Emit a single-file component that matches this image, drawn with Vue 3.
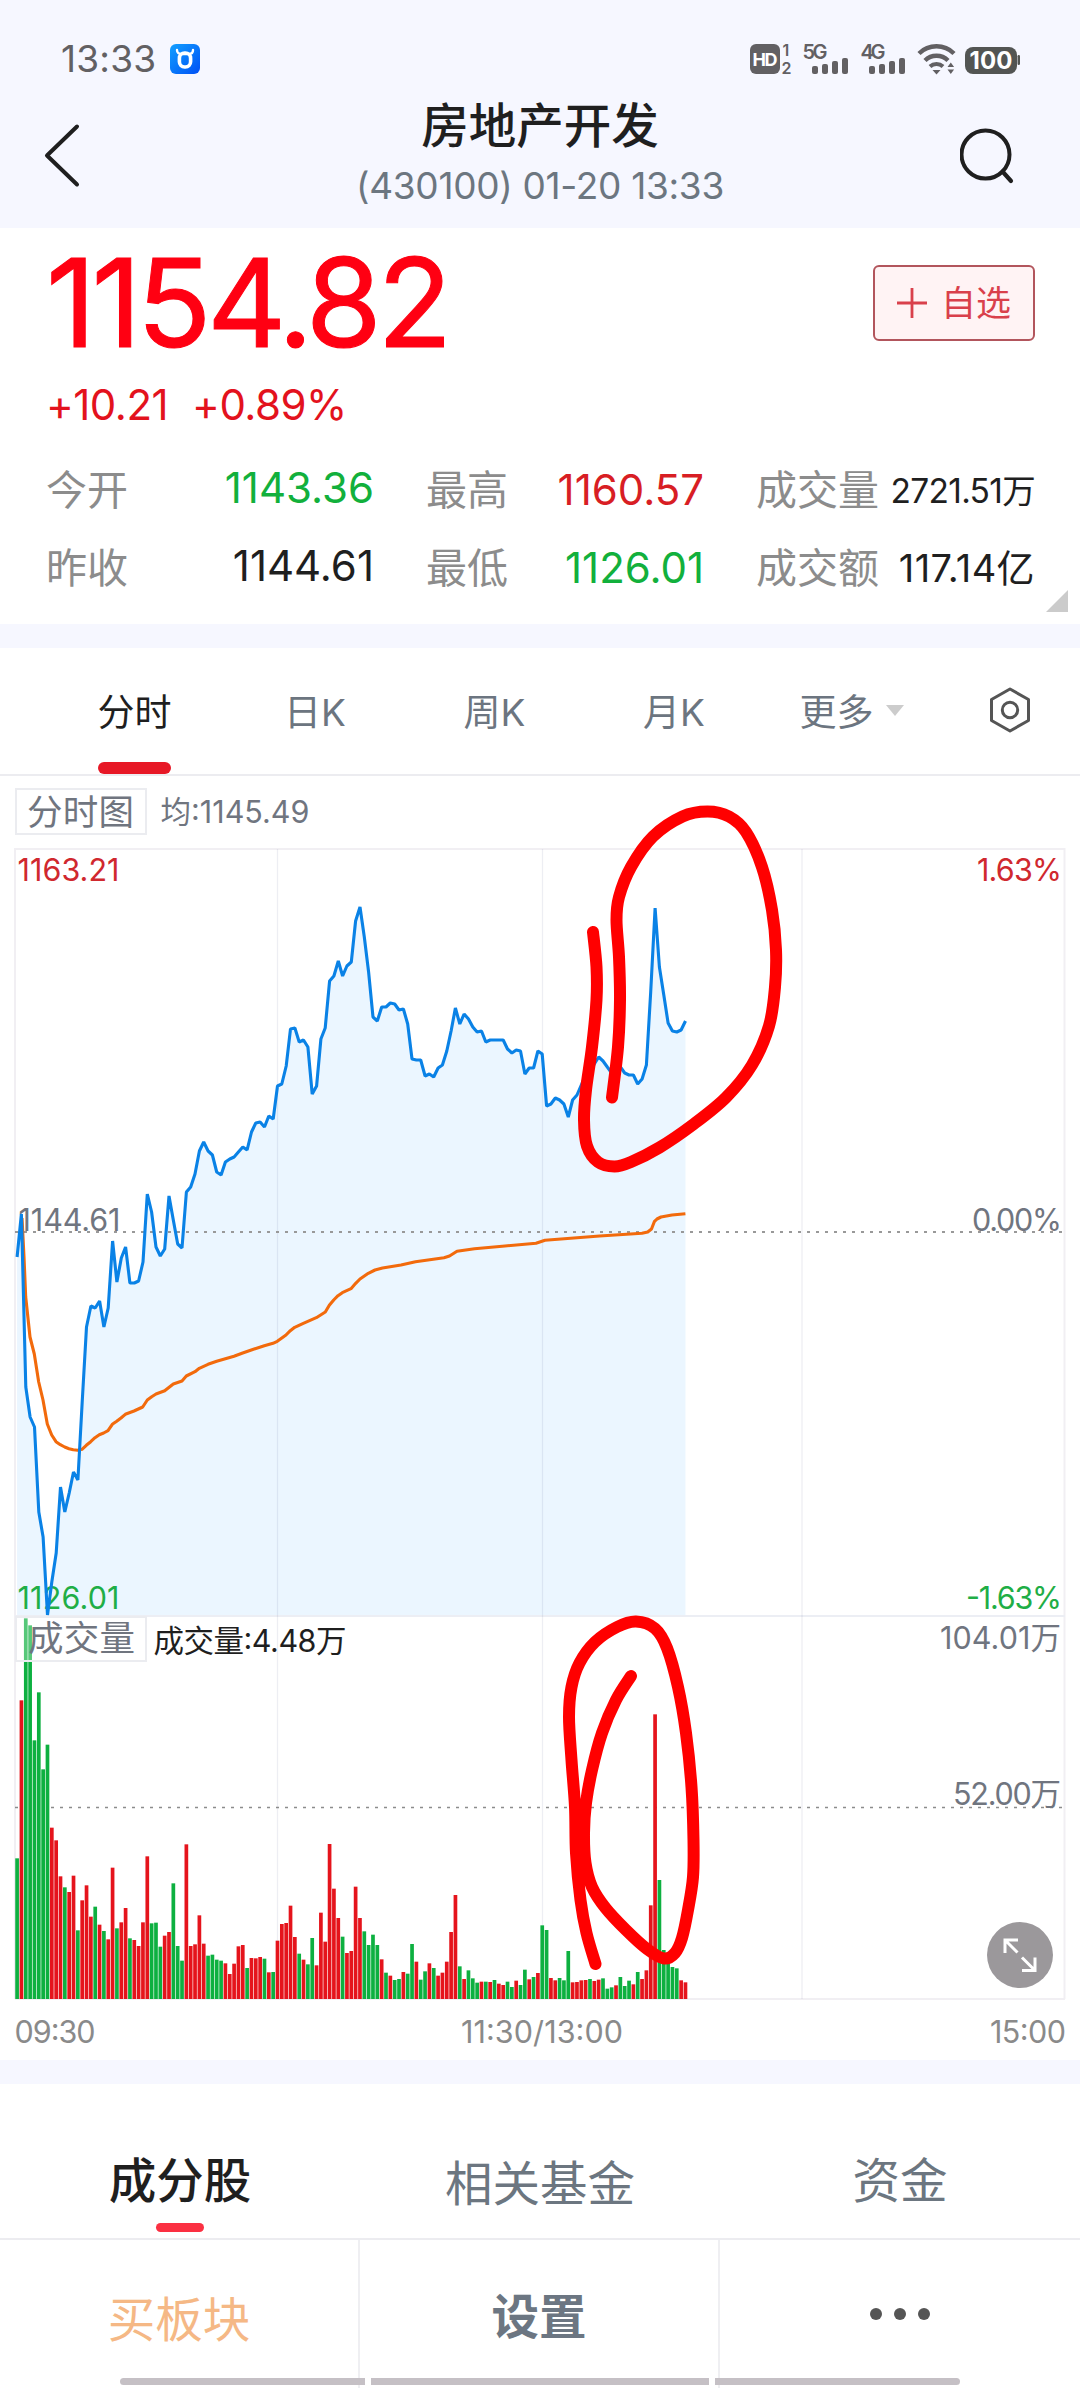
<template>
  <div class="page">
    <header class="header">
      <div class="status-bar">
        <span class="clock">13:33</span>
        <svg class="app-badge" width="30" height="30" viewBox="0 0 30 30">
          <defs>
            <linearGradient id="badge" x1="0" y1="0" x2="1" y2="1">
              <stop offset="0" stop-color="#12a0ff" />
              <stop offset="1" stop-color="#0050f5" />
            </linearGradient>
          </defs>
          <rect width="30" height="30" rx="6" fill="url(#badge)" />
          <path d="M7 6c0 3 2 4 4 4h8c2 0 4-1 4-4" fill="none" stroke="#fff" stroke-width="2.4" stroke-linecap="round" />
          <rect x="9.4" y="9" width="11.2" height="14" rx="5.2" fill="none" stroke="#fff" stroke-width="3.6" />
        </svg>
        <svg class="signals" width="272" height="50" viewBox="0 -8 272 50">
          <rect x="2" y="2" width="30" height="30" rx="6" fill="#626063" />
          <text x="4.5" y="23.500" class="st-hd" textLength="25">HD</text>
          <text x="34.500" y="14" class="st-num">1</text>
          <text x="33.5" y="32" class="st-num">2</text>
          <text x="54.5" y="17" class="st-net" textLength="25">5G</text>
          <text x="112.5" y="17" class="st-net" textLength="25">4G</text>
          <g v-for="x in [64, 121]" :key="x" fill="#626063">
            <rect :x="x" y="24" width="6" height="8" rx="2" />
            <rect :x="x + 10" y="22" width="6" height="10" rx="2" />
            <rect :x="x + 20" y="19" width="6" height="13" rx="2" />
            <rect :x="x + 30" y="16" width="6" height="16" rx="2" />
          </g>
          <g fill="none" stroke="#626063" stroke-width="4.500">
            <path d="M171 11.5a25 25 0 0 1 35 0" />
            <path d="M177 18.5a16.500 16.500 0 0 1 23 0" />
            <path d="M182 24.500a9.500 9.500 0 0 1 13 0" stroke-width="4" />
          </g>
          <path d="M184.500 28h8l-4 4.500z M199.500 25l3.300-4.600 3.300 4.600z M199.500 27.500l3.300 4.600 3.300-4.600z" fill="#626063" />
          <rect x="217" y="5" width="52" height="27" rx="8" fill="#535553" />
          <rect x="269.500" y="13" width="2.500" height="10" rx="1.200" fill="#535553" />
          <text x="221.500" y="27" class="st-bat" textLength="43">100</text>
        </svg>
      </div>
      <div class="title-bar">
        <svg width="60" height="70" viewBox="0 0 60 70">
          <path d="M47 6.500 17 35.500l30 29" fill="none" stroke="#1f1f1f" stroke-width="4" stroke-linecap="round" stroke-linejoin="round" />
        </svg>
        <div class="title">
          <h1>房地产开发</h1>
          <p>(430100) 01-20 13:33</p>
        </div>
        <svg width="60" height="70" viewBox="0 0 60 70">
          <circle cx="25.500" cy="34.500" r="24" fill="none" stroke="#1f1f1f" stroke-width="4" />
          <path d="M42.500 51.500 51 61" stroke="#1f1f1f" stroke-width="4.200" stroke-linecap="round" />
        </svg>
      </div>
    </header>

    <section class="quote">
      <div class="quote-top">
        <div class="price">1154.82</div>
        <button class="watch">
          <svg width="30" height="30" viewBox="0 0 30 30">
            <path d="M15 0v30M0 15h30" stroke="#d9404b" stroke-width="2.800" />
          </svg>
          <span>自选</span>
        </button>
      </div>
      <div class="change"><span>+10.21</span><span>+0.89%</span></div>
      <div class="stats">
        <div v-for="s in stats" :key="s.label" class="stat">
          <span class="stat-label">{{ s.label }}</span>
          <span class="stat-value" :class="s.cls">{{ s.value }}</span>
        </div>
      </div>
      <svg class="corner" width="22" height="22" viewBox="0 0 22 22">
        <path d="M22 0v22H0z" fill="#cbcbcb" />
      </svg>
    </section>

    <nav class="periods">
      <span class="period active">分时</span>
      <span class="period">日K</span>
      <span class="period">周K</span>
      <span class="period">月K</span>
      <span class="period more">更多<i class="caret"></i></span>
      <span class="period gear">
        <svg width="44" height="48" viewBox="0 0 44 48">
          <path d="M22 3 40.500 13.500v21L22 45 3.500 34.500v-21z" fill="none" stroke="#555" stroke-width="3" stroke-linejoin="round" />
          <circle cx="22" cy="24" r="7.700" fill="none" stroke="#555" stroke-width="3" />
        </svg>
      </span>
    </nav>

    <svg class="chart" width="1080" height="1284" viewBox="0 776 1080 1284">
      <!-- Header labels -->
      <rect x="16" y="789" width="130" height="45" class="tag" />
      <text x="27" y="825" class="tag-text" textLength="107">分时图</text>
      <text x="160.500" y="823" class="lbl" textLength="149">均:1145.49</text>

      <path :d="areaPath" fill="#ebf6ff" />

      <!-- Grid -->
      <g stroke="#f1eff3" stroke-width="2" fill="none">
        <path d="M15 849H1065M15 1999H1065M15 848V1999M1064.500 848V1999" />
        <path d="M15 1616H1065" stroke="#eceef4" />
      </g>
      <path d="M277.500 849V1999M542.500 849V1999M802 849V1999" stroke="#1a2a60" stroke-opacity=".08" stroke-width="1.200" />
      <path d="M15 1232H1063" stroke="#999" stroke-width="2" stroke-dasharray="3 6" />
      <path d="M15 1807.500H1063" stroke="#8c8c8c" stroke-width="1.400" stroke-dasharray="3 6" />

      <!-- Axis values -->
      <text x="17.500" y="881" class="lbl up" textLength="102">1163.21</text>
      <text x="18.500" y="1231" class="lbl" textLength="102">1144.61</text>
      <text x="17.500" y="1608.500" class="lbl down" textLength="102">1126.01</text>
      <text x="977" y="881" class="lbl up" textLength="85">1.63%</text>
      <text x="972" y="1231" class="lbl" textLength="90">0.00%</text>
      <text x="966" y="1608.500" class="lbl down" textLength="96">-1.63%</text>

      <polyline :points="avgLine" fill="none" stroke="#f26a0c" stroke-width="3.100" stroke-linejoin="round" />
      <polyline :points="priceLine" fill="none" stroke="#0a82e6" stroke-width="3.100" stroke-linejoin="bevel" />

      <!-- Volume -->
      <rect
        v-for="(b, i) in bars"
        :key="i"
        :x="b.x"
        :y="b.y"
        width="3.700"
        :height="b.h"
        :fill="b.color"
      />
      <rect x="16" y="1617" width="130" height="44" class="tag tag-over" />
      <text x="28" y="1651" class="tag-text" textLength="107">成交量</text>
      <text x="153.500" y="1652" class="lbl dark" textLength="193">成交量:4.48万</text>
      <text x="940" y="1649" class="lbl" textLength="121">104.01万</text>
      <text x="953" y="1804.500" class="lbl" textLength="108">52.00万</text>

      <circle cx="1020" cy="1955" r="33" fill="#9b989b" />
      <path
        d="M1017.500 1952.500 1005 1940M1018 1940h-13v13M1022 1957.500l12.500 12.500M1022 1970.500h13v-13"
        fill="none" stroke="#fff" stroke-width="3"
      />

      <text x="14.500" y="2043" class="lbl time" textLength="81">09:30</text>
      <text x="461" y="2043" class="lbl time" textLength="162">11:30/13:00</text>
      <text x="990" y="2043" class="lbl time" textLength="76">15:00</text>

      <!-- Freehand marks -->
      <path v-for="(m, i) in marks" :key="'m' + i" :d="smooth(m)" class="mark" />
    </svg>

    <nav class="sections">
      <span class="section active">成分股</span>
      <span class="section lower">相关基金</span>
      <span class="section">资金</span>
    </nav>

    <footer class="actions">
      <span class="action buy">买板块</span>
      <span class="action setting">设置</span>
      <span class="action dots"><i></i><i></i><i></i></span>
      <div class="home-bar"><b></b><b></b><b></b></div>
    </footer>
  </div>
</template>

<script setup>
const stats = [
  { label: '今开', value: '1143.36', cls: 'down' },
  { label: '最高', value: '1160.57', cls: 'up low' },
  { label: '成交量', value: '2721.51万', cls: 'small' },
  { label: '昨收', value: '1144.61', cls: '' },
  { label: '最低', value: '1126.01', cls: 'down low' },
  { label: '成交额', value: '117.14亿', cls: 'medium' },
]

const X0 = 17.1
const STEP = 4.34
const BASE = 1999

// one entry per minute
const price = [
  1257, 1214, 1387, 1417, 1427, 1512, 1537, 1615, 1582, 1553, 1487, 1512, 1493, 1472, 1480, 1402,
  1327, 1306, 1308, 1301, 1327, 1308, 1241, 1282, 1258, 1247, 1283, 1283, 1281, 1262, 1194, 1212,
  1247, 1256, 1249, 1196, 1220, 1244, 1248, 1192, 1187, 1174, 1151, 1142, 1151, 1155, 1172, 1175,
  1162, 1159, 1157, 1152, 1147, 1150, 1132, 1123, 1122, 1127, 1116, 1119, 1086, 1084, 1066, 1029,
  1028, 1042, 1040, 1047, 1094, 1086, 1039, 1028, 981, 976, 961, 976, 966, 962, 921, 907,
  937, 972, 1017, 1021, 1007, 1007, 1003, 1004, 1010, 1009, 1024, 1059, 1060, 1060, 1076, 1074,
  1077, 1068, 1065, 1051, 1031, 1008, 1024, 1014, 1019, 1027, 1032, 1031, 1042, 1040, 1040, 1040,
  1040, 1049, 1053, 1050, 1051, 1074, 1068, 1068, 1051, 1054, 1106, 1104, 1098, 1100, 1104, 1117,
  1100, 1095, 1085, 1075, 1070, 1064, 1057, 1061, 1067, 1073, 1072, 1067, 1073, 1075, 1075, 1084,
  1079, 1065, 992, 908, 967, 995, 1023, 1031, 1032, 1030, 1021,
]

// positive = red, negative = green
const volume = [
  -422, 896, -1142, -1121, -776, -920, -689, -763, 514, 476, 368, -335, 321, 370, -206, 296,
  341, 247, -277, 223, -204, 179, 394, -212, 230, 273, -182, 177, 159, 230, 428, -227,
  -229, -157, 190, 201, -347, -159, -115, 464, 159, 164, 251, 166, -130, -133, -118, -115,
  107, 75, 106, 158, 162, -93, 123, 122, 126, -121, 80, -81, 175, 225, 228, 280,
  186, -136, 118, -104, -183, 101, 259, 172, 465, 331, 243, -187, 138, 144, 337, 243,
  -203, -162, -193, -162, 119, -79, 70, -57, -60, 81, -76, -165, 112, -58, -83, 107,
  -93, 70, 79, 112, 201, 312, -98, 60, -86, -62, -49, 52, -52, 51, -57, 46,
  42, -52, -36, 55, -42, -88, 59, -66, 78, -221, -207, 63, 56, -63, -56, -144,
  50, 51, 56, 57, -60, 54, 58, -62, -31, -35, 41, -66, -39, -55, 44, -81,
  60, 86, 281, 854, -357, -147, -112, -96, -92, 56, 50,
]

const priceLine = price.map((y, i) => `${(X0 + i * STEP).toFixed(1)},${y}`).join(' ')
const lastX = X0 + (price.length - 1) * STEP
const areaPath = `M${X0} 1616 L${priceLine} L${lastX} 1616 Z`

const avgLine =
  '22,1218 24,1257 25.700,1297 30,1337 34.300,1354 38.700,1382 43,1400 47.300,1424 51.700,1435 56,1441.700 60.300,1444.700 ' +
  '64.700,1447 69,1448.700 73.300,1449.700 77.700,1450.300 82,1449.300 86.300,1445.300 90.700,1441.700 95,1437.700 99.300,1434.700 ' +
  '103.700,1433 108,1430.700 112.300,1424.300 116.700,1421.300 121,1418 125.300,1414.300 134,1411 142.700,1407 147.300,1400 ' +
  '151.700,1396.700 156,1394 164.700,1390.700 173.300,1384 182,1381 186.300,1376 195,1371.700 199.300,1368.300 208,1364.300 ' +
  '216.700,1361.300 234,1356.300 242.700,1353 251.300,1350 264.300,1345.700 273,1343.300 277.300,1341.300 286,1335 290.300,1330.700 ' +
  '294.700,1327.300 303.300,1323.300 316.300,1317.700 325.300,1312 329.300,1305.300 333.700,1300 338,1295.700 342.300,1292.700 ' +
  '351,1288.700 355.700,1283.300 360,1279 368.300,1273.300 375,1270 382.500,1268 401,1265 415.500,1261.700 444,1257.700 ' +
  '449.500,1256 457,1251.300 474.500,1248.700 505,1246 536,1243.300 545,1240.300 599.600,1236 642,1233.300 647.700,1232 ' +
  '651.500,1229 654.300,1221.700 657,1219 661,1217 672,1215 685.400,1213.700'

const bars = volume.map((v, i) => {
  const h = Math.abs(v) / 3
  return { x: X0 + i * STEP - 1.85, y: BASE - h, h, color: v > 0 ? '#e5141c' : '#0db040' }
})

const marks = [
  [
    [593, 932], [596.5, 967], [596.5, 1000], [592, 1047], [586, 1090], [584, 1120], [587, 1146],
    [598, 1162], [614.5, 1166.5], [631, 1162], [659.5, 1147.5], [692.5, 1125], [726, 1097.5],
    [752, 1065], [769, 1026], [775, 987], [776, 950], [772, 910], [762, 867], [746, 832],
    [729, 816.5], [707.5, 811.5], [682.5, 816.5], [653, 836.5], [631, 867], [619, 897],
    [616.5, 920], [619, 957], [620, 1000], [618, 1047], [612, 1097.5],
  ],
  [
    [631, 1676], [616, 1700], [602, 1733], [592, 1770], [586, 1803], [584, 1833], [585.5, 1863],
    [592, 1887], [605.5, 1908], [626, 1930], [647, 1949], [664, 1958.5], [675, 1953], [682, 1938],
    [688, 1910], [693, 1877], [693.5, 1840], [691.5, 1787], [686, 1733], [678, 1687], [667, 1648],
    [655, 1628.5], [636, 1621.5], [617, 1627], [595, 1642], [579.5, 1663], [571.5, 1687],
    [569, 1717], [571.5, 1760], [575, 1807], [576, 1853], [580.5, 1900], [586.5, 1933], [595.5, 1964],
  ],
]

// Catmull-Rom spline as cubic beziers
function smooth(p) {
  let d = `M${p[0]}`
  for (let i = 0; i < p.length - 1; i++) {
    const a = p[i - 1] || p[i]
    const b = p[i]
    const c = p[i + 1]
    const e = p[i + 2] || c
    d += ` C${b[0] + (c[0] - a[0]) / 6},${b[1] + (c[1] - a[1]) / 6}`
    d += ` ${c[0] - (e[0] - b[0]) / 6},${c[1] - (e[1] - b[1]) / 6} ${c}`
  }
  return d
}
</script>

<style>
body {
  background: #fff;
}
</style>

<style scoped>
.page {
  width: 1080px;
  height: 2388px;
  display: flex;
  flex-direction: column;
  overflow: hidden;
  background: #fff;
  color: #1f1f1f;
  font-family: Inter, 'Noto Sans CJK SC', sans-serif;
}

/* Header */
.header {
  height: 228px;
  flex-shrink: 0;
  background: #f6f7ff;
}

.status-bar {
  display: flex;
  align-items: center;
  height: 46px;
  padding: 36px 60px 0 61px;
}

.clock {
  width: 109px;
  font-size: 37px;
  line-height: 46px;
  letter-spacing: 0.2px;
  color: #626063;
}

.signals {
  margin-left: auto;
}

.st-hd {
  font: 700 18px Inter, sans-serif;
  fill: #fff;
}

.st-num {
  font: 600 16px Inter, sans-serif;
  fill: #626063;
}

.st-net {
  font: 600 20px Inter, sans-serif;
  fill: #626063;
}

.st-bat {
  font: 700 24px Inter, sans-serif;
  fill: #fff;
}

.title-bar {
  display: flex;
  justify-content: space-between;
  align-items: flex-start;
  padding: 11px 60px 0 30px;
}

.title-bar > svg {
  margin-top: 27px;
}

.title {
  margin-left: 30px;
  text-align: center;
}

h1 {
  margin: 0;
  font-size: 47.5px;
  font-weight: 500;
  line-height: 66px;
}

.title p {
  margin: 4px 0 0;
  font-size: 37px;
  line-height: 46px;
  letter-spacing: -0.3px;
  color: #6c7680;
}

/* Quote */
.quote {
  position: relative;
  box-sizing: border-box;
  height: 396px;
  flex-shrink: 0;
  padding: 0 45px 0 46px;
}

.quote-top {
  display: flex;
  justify-content: space-between;
  align-items: flex-start;
  height: 148px;
}

.price {
  font-size: 123px;
  line-height: 149px;
  letter-spacing: -4.6px;
  color: #ff0012;
  -webkit-text-stroke: 1px #ff0012;
}

.watch {
  display: flex;
  align-items: center;
  gap: 14px;
  box-sizing: border-box;
  width: 162px;
  height: 76px;
  margin-top: 37px;
  padding: 0 0 0 22px;
  border: 2px solid #b2555c;
  border-radius: 6px;
  background: #fff3f4;
  color: #d9404b;
  font: 35px/50px 'Noto Sans CJK SC', sans-serif;
}

.watch span {
  margin-top: -4px;
}

.change {
  display: flex;
  gap: 24px;
  height: 50px;
  margin-top: 4px;
  line-height: 50px;
  font-size: 42px;
  letter-spacing: -0.5px;
  color: #e3121d;
}

.stats {
  display: grid;
  grid-template-columns: 328px 278px 279px;
  justify-content: space-between;
  row-gap: 18px;
  margin-top: 27px;
}

.stat {
  display: flex;
  justify-content: space-between;
  align-items: center;
  height: 60px;
  white-space: nowrap;
}

.stat-label {
  font-size: 41px;
  color: #8c8c8c;
}

.stat-value {
  font-size: 42px;
}

.stat-value.low {
  padding-top: 4px;
}

.stat-value.small {
  padding-top: 2px;
  font-size: 33.5px;
  letter-spacing: -0.7px;
}

.stat-value.medium {
  font-size: 38px;
  letter-spacing: 0.4px;
}

.up {
  color: #d81e24;
  fill: #d0282e;
}

.down {
  color: #12b03c;
  fill: #1fae46;
}

.corner {
  position: absolute;
  right: 12px;
  bottom: 12px;
}

/* Period tabs */
.periods {
  display: grid;
  grid-template-columns: 181px 180px 179px 180px 175px 1fr;
  box-sizing: border-box;
  height: 152px;
  flex-shrink: 0;
  border-top: 24px solid #f6f7ff;
  border-bottom: 2px solid #ececf0;
  padding-left: 44px;
}

.period {
  position: relative;
  display: flex;
  justify-content: center;
  align-items: center;
  padding-bottom: 2px;
  font-size: 37px;
  color: #6c7580;
}

.period.active {
  color: #1f1f1f;
}

.period.active::after {
  content: '';
  position: absolute;
  left: 54px;
  bottom: 0;
  width: 73px;
  height: 12px;
  border-radius: 6px;
  background: #e71826;
}

.caret {
  margin-left: 12px;
  border: 9px solid transparent;
  border-top: 11px solid #ccc;
  border-bottom: 0;
}

/* Chart */
.chart {
  display: block;
  flex-shrink: 0;
}

.lbl {
  font: 30.5px Inter, 'Noto Sans CJK SC', sans-serif;
}

.lbl:not(.up, .down, .dark, .time) {
  fill: #70757f;
}

.lbl.dark {
  fill: #1f1f1f;
}

.lbl.time {
  fill: #8a8a8a;
}

.tag {
  fill: #fff;
  stroke: #ebecf0;
  stroke-width: 2;
}

.tag-over {
  fill-opacity: 0.3;
}

.tag-text {
  font: 35.5px 'Noto Sans CJK SC', sans-serif;
  fill: #70757f;
}

.mark {
  fill: none;
  stroke: #f00;
  stroke-width: 12;
  stroke-linecap: round;
}

/* Bottom tabs */
.sections {
  display: grid;
  grid-template-columns: repeat(3, 1fr);
  box-sizing: border-box;
  height: 180px;
  flex-shrink: 0;
  border-top: 24px solid #f6f7ff;
  border-bottom: 2px solid #ececf0;
}

.section {
  position: relative;
  height: 154px;
  line-height: 194px;
  text-align: center;
  font-size: 47.5px;
  color: #6c7680;
}

.section.lower {
  line-height: 200px;
}

.section.active {
  font-weight: 500;
  color: #1f1f1f;
}

.section.active::after {
  content: '';
  position: absolute;
  left: 156px;
  top: 139px;
  width: 48px;
  height: 9px;
  border-radius: 5px;
  background: #fb3042;
}

.actions {
  position: relative;
  display: grid;
  grid-template-columns: repeat(3, 1fr);
  height: 148px;
}

.action {
  box-sizing: border-box;
  display: flex;
  justify-content: center;
  height: 148px;
  line-height: 159px;
  font-size: 47.5px;
  border-right: 2px solid #efeff2;
}

.buy {
  color: #f5b885;
}

.setting {
  font-weight: 700;
  color: #6c7682;
  line-height: 154px;
}

.dots {
  gap: 12px;
  align-items: center;
  border-right: 0;
}

.dots i {
  width: 12px;
  height: 12px;
  border-radius: 50%;
  background: #555;
}

.home-bar {
  position: absolute;
  left: 120px;
  bottom: 3px;
  display: flex;
  gap: 6px;
  width: 840px;
  height: 7px;
  border-radius: 4px;
  overflow: hidden;
}

.home-bar b {
  width: 245px;
  background: #c5c0c5;
}

.home-bar b:nth-child(2) {
  width: 338px;
}
</style>
